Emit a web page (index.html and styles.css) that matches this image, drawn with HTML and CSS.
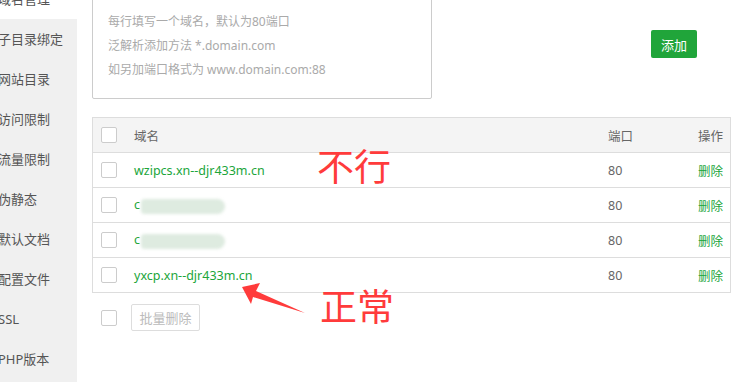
FILE: index.html
```html
<!DOCTYPE html>
<html lang="zh-CN">
<head>
  <meta charset="UTF-8" />
  <title>域名管理</title>
  <link rel="stylesheet" href="styles.css">
</head>
<body>

  <div class="sidebar">
    <div class="menu-item active">域名管理</div>
    <div class="menu-item">子目录绑定</div>
    <div class="menu-item">网站目录</div>
    <div class="menu-item">访问限制</div>
    <div class="menu-item">流量限制</div>
    <div class="menu-item">伪静态</div>
    <div class="menu-item">默认文档</div>
    <div class="menu-item">配置文件</div>
    <div class="menu-item">SSL</div>
    <div class="menu-item">PHP版本</div>
  </div>

  <div class="main">
    <div class="add-row">
      <div class="domain-input">
        <div>每行填写一个域名，默认为80端口</div>
        <div>泛解析添加方法 *.domain.com</div>
        <div>如另加端口格式为 www.domain.com:88</div>
      </div>
      <button class="btn-add">添加</button>
    </div>

    <table class="domain-table">
      <thead>
        <tr>
          <th class="col-check"><span class="checkbox"></span></th>
          <th>域名</th>
          <th class="col-port">端口</th>
          <th class="col-op">操作</th>
        </tr>
      </thead>
      <tbody>
        <tr>
          <td class="col-check"><span class="checkbox"></span></td>
          <td><a class="domain">wzipcs.xn--djr433m.cn</a></td>
          <td class="col-port">80</td>
          <td class="col-op"><a class="del">删除</a></td>
        </tr>
        <tr>
          <td class="col-check"><span class="checkbox"></span></td>
          <td><a class="domain">c</a><span class="smudge"></span></td>
          <td class="col-port">80</td>
          <td class="col-op"><a class="del">删除</a></td>
        </tr>
        <tr>
          <td class="col-check"><span class="checkbox"></span></td>
          <td><a class="domain">c</a><span class="smudge"></span></td>
          <td class="col-port">80</td>
          <td class="col-op"><a class="del">删除</a></td>
        </tr>
        <tr>
          <td class="col-check"><span class="checkbox"></span></td>
          <td><a class="domain">yxcp.xn--djr433m.cn</a></td>
          <td class="col-port">80</td>
          <td class="col-op"><a class="del">删除</a></td>
        </tr>
      </tbody>
    </table>

    <div class="batch-row">
      <span class="checkbox"></span>
      <button class="btn-batch">批量删除</button>
    </div>

    <!-- annotations drawn over the screenshot -->
    <div class="note note-bad">不行</div>
    <div class="note note-ok">正常</div>
    <svg class="arrow" width="80" height="40" viewBox="0 0 80 40">
      <polygon points="165,287 183,283 179,291 228,313 176,297 174,304" transform="translate(-163,-281)" fill="#ff3b3b"/>
    </svg>
  </div>

</body>
</html>
```

FILE: styles.css
```css
body {
  margin: 0;
  display: flex;
  background: #fff;
  font-family: "Noto Sans", "Noto Sans CJK SC", sans-serif;
  font-size: 13px;
  color: #666;
  overflow: hidden;
  height: 382px;
}

.sidebar {
  width: 77px;
  flex-shrink: 0;
  margin-top: -21px;
  background: #f0f0f0;
  overflow: hidden;
}

.menu-item {
  height: 40px;
  line-height: 40px;
  margin-left: -2px;
  white-space: nowrap;
  color: #555;
}

.menu-item.active {
  background: #fff;
}

.main {
  position: relative;
  flex: 1;
  padding: 0 11px 0 15px;
}

.add-row {
  display: flex;
  align-items: flex-start;
}

.domain-input {
  width: 323px;
  height: 88px;
  margin-top: -3px;
  padding: 12px 0 0 15px;
  border: 1px solid #ccc;
  border-radius: 2px;
  color: #aaa;
  font-size: 12px;
  line-height: 24px;
}

.btn-add {
  margin: 30px 34px 0 auto;
  width: 46px;
  height: 28px;
  border: none;
  border-radius: 2px;
  background: #20a53a;
  color: #fff;
  font-family: inherit;
  font-size: 13px;
  padding: 0;
}

.domain-table {
  width: 100%;
  margin-top: 18px;
  border-collapse: collapse;
  border: 1px solid #ddd;
  font-size: 12.5px;
}

.domain-table th,
.domain-table td {
  height: 34px;
  padding: 0;
  border-top: 1px solid #ddd;
  text-align: left;
  font-weight: normal;
}

.domain-table th {
  background: #f4f4f4;
  color: #666;
}

.col-check {
  width: 33px;
  padding-left: 8px !important;
}

.col-port {
  width: 75px;
}

.col-op {
  width: 40px;
  text-align: right !important;
  padding-right: 7px !important;
}

.checkbox {
  display: block;
  width: 14px;
  height: 14px;
  border: 1px solid #ccc;
  border-radius: 2px;
  background: #fff;
}

.domain,
.del {
  color: #20a53a;
}

.smudge {
  display: inline-block;
  vertical-align: middle;
  width: 84px;
  height: 15px;
  margin-left: 1px;
  background: #deebe0;
  border-radius: 4px 8px 8px 4px;
  filter: blur(1.5px);
}

.batch-row {
  display: flex;
  align-items: center;
  gap: 14px;
  margin-top: 11px;
  padding-left: 9px;
}

.btn-batch {
  width: 69px;
  height: 27px;
  padding: 0;
  border: 1px solid #ddd;
  border-radius: 2px;
  background: #fff;
  color: #bbb;
  font-family: inherit;
  font-size: 13px;
}

.note {
  position: absolute;
  color: #ff3b3b;
  font-size: 37px;
  line-height: 1;
}

.note-bad {
  left: 240px;
  top: 148px;
}

.note-ok {
  left: 243px;
  top: 288px;
}

.arrow {
  position: absolute;
  left: 163px;
  top: 281px;
}
```
